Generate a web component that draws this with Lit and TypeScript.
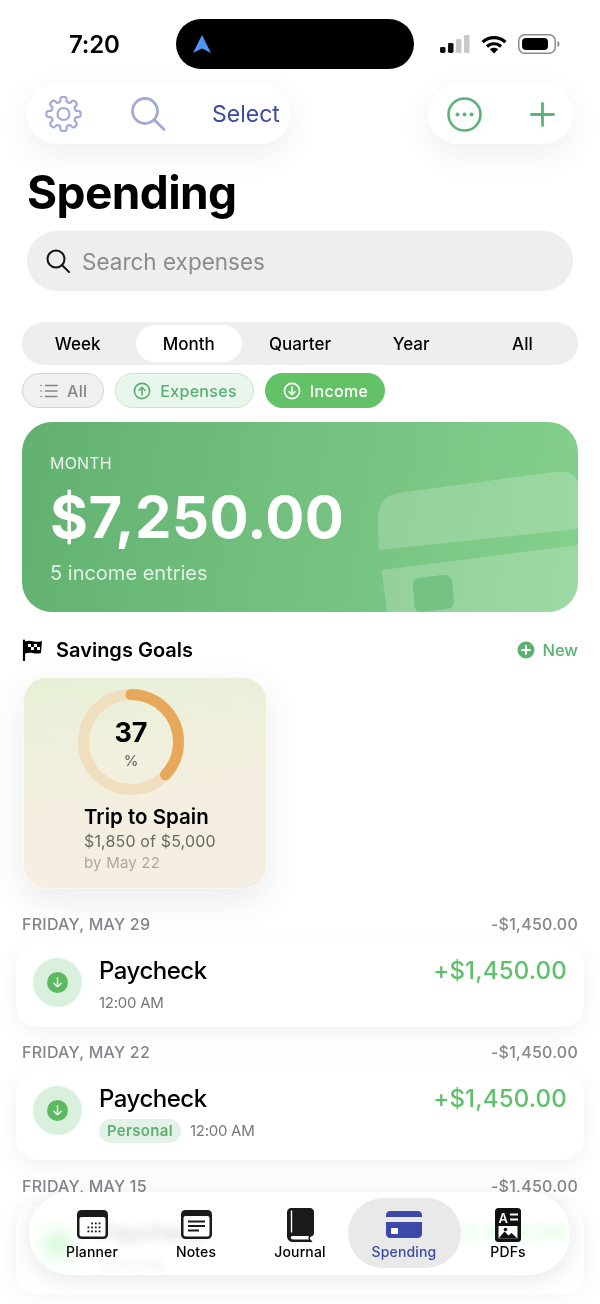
import { LitElement, html, css, svg } from "lit";
import { customElement } from "lit/decorators.js";

const arrowCircle = (dir: "up" | "down", color: string, size = 18) => html`<svg class="ic" width=${size} height=${size} viewBox="0 0 18 18" fill="none" stroke=${color} stroke-width="1.6" stroke-linecap="round" stroke-linejoin="round">
  <circle cx="9" cy="9" r="7.6"></circle>
  ${dir === "up" ? svg`<path d="M9 13V5.4M6 8.2l3-3 3 3"></path>` : svg`<path d="M9 5v7.6M6 9.8l3 3 3-3"></path>`}
</svg>`;

const txIcon = html`<div class="tx-ic"><div class="tx-dot"><svg width="13" height="13" viewBox="0 0 13 13" fill="none" stroke="#fff" stroke-width="1.3" stroke-linecap="round" stroke-linejoin="round"><path d="M6.5 1.8v9M2.9 7.3l3.6 3.6 3.6-3.6"></path></svg></div></div>`;

const gearPath = (() => {
  // 8-tooth cog outline
  const cx = 18, cy = 18, teeth = 8, ro = 17, ri = 13;
  const pts: string[] = [];
  for (let i = 0; i < teeth; i++) {
    const a = (i / teeth) * Math.PI * 2 - Math.PI / 2;
    const s = Math.PI / teeth;
    const p = (r: number, t: number) => `${(cx + r * Math.cos(t)).toFixed(2)} ${(cy + r * Math.sin(t)).toFixed(2)}`;
    pts.push(`${i === 0 ? "M" : "L"}${p(ri, a - s * 0.62)}`);
    pts.push(`Q${p(ro + 1.2, a - s * 0.5)} ${p(ro, a)}`);
    pts.push(`Q${p(ro + 1.2, a + s * 0.5)} ${p(ri, a + s * 0.62)}`);
    const mid = a + s;
    pts.push(`Q${p(ri - 1.4, mid)} ${p(ri, mid + s - s * 0.62)}`);
  }
  return pts.join(" ") + "Z";
})();

const plannerDots = [0, 1, 2].flatMap((r) =>
  [0, 1, 2, 3].map((c) => (r === 0 && c === 0 ? null : svg`<rect x=${10.5 + c * 3.7} y=${12.5 + r * 4} width="1.8" height="1.8" fill="#1a1a1a"></rect>`))
);

@customElement("app-root")
export class AppRoot extends LitElement {
  static styles = css`
    :host {
      display: block;
      position: relative;
      width: 600px;
      height: 1304px;
      overflow: hidden;
      background: #fff;
      font-family: Inter, "Liberation Sans", sans-serif;
      color: #000;
    }
    .ic { display: block; flex: none; }

    .status { display: flex; align-items: center; height: 50px; margin-top: 19px; padding-left: 69px; }
    .time { width: 107px; font-size: 24px; font-weight: 600; letter-spacing: -0.2px; }
    .island { width: 238px; height: 50px; background: #000; border-radius: 25px; display: flex; align-items: center; padding-left: 17px; box-sizing: border-box; }
    .sys { display: flex; align-items: center; margin-left: 26px; gap: 11px; }

    .topbar { display: flex; justify-content: space-between; padding: 15px 27px 0; }
    .pill { height: 60px; border-radius: 30px; background: #fff; display: flex; align-items: center; box-shadow: 0 10px 34px rgba(0, 0, 0, 0.07); }
    .pill.left { width: 263px; padding-left: 18px; box-sizing: border-box; }
    .pill.right { width: 145px; padding-left: 19px; gap: 48px; box-sizing: border-box; }
    .select { margin-left: 46px; font-size: 23px; color: #3f4aa5; }
    .pill.left .s-ic { margin-left: 49px; }

    h1 { margin: 20px 0 0 27px; font-size: 46px; line-height: 56px; font-weight: 700; letter-spacing: -0.6px; }

    .search { margin: 11px 27px 0; height: 60px; border-radius: 30px; background: #eeeeee; display: flex; align-items: center; padding-left: 19px; gap: 12px; color: #8b8b8f; font-size: 22.5px; }

    .seg { margin: 31px 22px 0; height: 43px; border-radius: 22px; background: #eeeeee; display: grid; grid-template-columns: repeat(5, 1fr); font-size: 17px; font-weight: 500; }
    .seg div { display: flex; align-items: center; justify-content: center; border-radius: 19px; margin: 3px 2.5px; }
    .seg .on { background: #fff; }

    .chips { display: flex; gap: 11px; margin: 8px 22px 0; }
    .chip { height: 35px; box-sizing: border-box; border-radius: 18px; border: 1px solid transparent; display: flex; align-items: center; font-size: 16px; font-weight: 500; letter-spacing: 0.3px; gap: 9px; padding: 0 16px 0 17px; }
    .chip.all { background: #f0f0f0; border-color: #d4d4d4; color: #85858a; }
    .chip.exp { background: #e9f6ec; border-color: #c9e5d0; color: #59ae72; }
    .chip.inc { background: #62c265; color: #fff; }

    .hero { position: relative; overflow: hidden; margin: 14px 22px 0; height: 190px; border-radius: 30px; background: linear-gradient(100deg, #62b171 0%, #85d08d 100%); color: #fff; padding: 31px 28px 0; box-sizing: border-box; }
    .hero-deco { position: absolute; left: 0; top: 0; }
    .hero .lbl { position: relative; font-size: 16px; line-height: 20px; letter-spacing: 0.2px; color: rgba(255, 255, 255, 0.85); }
    .hero .amt { position: relative; font-size: 58px; line-height: 70px; font-weight: 700; margin-top: 9px; letter-spacing: 0.4px; }
    .hero .sub { position: relative; font-size: 20px; line-height: 26px; margin-top: 8px; color: rgba(255, 255, 255, 0.8); }

    .sec { display: flex; align-items: center; margin: 24px 22px 0; height: 28px; }
    .sec .name { margin-left: 12px; font-size: 20px; font-weight: 600; flex: 1; }
    .new { display: flex; align-items: center; gap: 7px; color: #5bb072; font-size: 16.5px; font-weight: 500; }

    .goal { position: relative; margin: 13px 0 0 23px; width: 244px; height: 212px; box-sizing: border-box; border-radius: 24px; border: 1.5px solid #fbf8ef; background: linear-gradient(170deg, #e6f0d6 0%, #f3efdf 45%, #f6eee3 100%); box-shadow: 0 12px 34px rgba(60, 60, 90, 0.1); display: flex; flex-direction: column; padding: 11px 0 0 60px; }
    .ring { position: relative; width: 106px; height: 106px; margin-left: -6px; }
    .ring-txt { position: absolute; inset: 0; display: flex; flex-direction: column; align-items: center; padding-top: 27px; box-sizing: border-box; }
    .ring-txt b { font-size: 27px; line-height: 34px; font-weight: 700; }
    .ring-txt span { font-size: 15px; line-height: 18px; margin-top: 2px; color: #5f5f5a; }
    .g-title { font-size: 20.5px; line-height: 26px; font-weight: 600; margin-top: 9px; }
    .g-amt { font-size: 16px; line-height: 21px; margin-top: 1px; color: #6a6a64; letter-spacing: 0.15px; white-space: nowrap; }
    .g-by { font-size: 15px; line-height: 21px; color: #a9a9a1; letter-spacing: 0.2px; }

    .day { display: flex; justify-content: space-between; margin: 0 22px; font-size: 16px; line-height: 20px; font-weight: 500; color: #85858a; letter-spacing: 0.25px; }
    .tx { margin: 8px 16px 0; box-sizing: border-box; border-radius: 22px; background: #fff; display: flex; padding: 16px 17px 0; box-shadow: 0 6px 24px rgba(0, 0, 0, 0.06); }
    .tx-ic { width: 49px; height: 49px; border-radius: 50%; background: #d9f0dc; display: flex; align-items: center; justify-content: center; flex: none; }
    .tx-dot { width: 21px; height: 21px; border-radius: 50%; background: #5cb95f; display: flex; align-items: center; justify-content: center; }
    .tx-main { flex: 1; margin-left: 17px; margin-top: -2px; }
    .tx-name { font-size: 24px; line-height: 30px; font-weight: 500; letter-spacing: -0.5px; }
    .tx-meta { display: flex; align-items: center; gap: 9px; margin-top: 5px; font-size: 15px; line-height: 24px; color: #77777b; letter-spacing: -0.25px; }
    .tag { height: 24px; border-radius: 12px; background: #e3f1e6; color: #5bb072; font-weight: 600; padding: 0 8px; font-size: 15px; letter-spacing: 0.3px; }
    .tx-amt { font-size: 24px; line-height: 30px; font-weight: 500; margin-top: -2px; color: #5cc26a; letter-spacing: 0.2px; }

    .nav { position: absolute; left: 29px; top: 1192px; width: 541px; height: 83px; box-sizing: border-box; border-radius: 42px; padding: 5px 11px 6px 10px; display: grid; grid-template-columns: repeat(5, 104px); background: rgba(255, 255, 255, 0.84); backdrop-filter: blur(5px) saturate(2.4); border: 1px solid rgba(255, 255, 255, 0.9); box-shadow: 0 4px 26px rgba(0, 0, 0, 0.1); }
    .nav-item { display: flex; flex-direction: column; align-items: center; font-size: 14px; font-weight: 500; letter-spacing: 0.15px; border-radius: 36px; }
    .nav-item .box { height: 37px; margin-top: 8px; display: flex; align-items: center; justify-content: center; }
    .nav-item span { line-height: 18px; margin-top: 0; }
    .nav-item.on { background: #e9e9e9; color: #3c49a8; margin: 0 -4.5px; }
    .fade { position: absolute; left: 0; right: 0; bottom: 0; height: 30px; background: linear-gradient(180deg, rgba(255, 255, 255, 0), rgba(255, 255, 255, 0.7)); }
  `;

  private statusIcons() {
    return html`<div class="sys">
      <svg class="ic" width="30" height="18" viewBox="0 0 30 18">
        <rect x="0" y="12" width="5.5" height="6" rx="1.4" fill="#111"></rect>
        <rect x="8" y="8" width="5.5" height="10" rx="1.4" fill="#111"></rect>
        <rect x="16" y="4" width="5.5" height="14" rx="1.4" fill="#c9c9c9"></rect>
        <rect x="24" y="0" width="5.5" height="18" rx="1.4" fill="#c9c9c9"></rect>
      </svg>
      <svg class="ic" width="26" height="19" viewBox="0 0 26 19" fill="none" stroke="#000" stroke-width="3.2">
        <path d="M1.6 7.2C8 1 18 1 24.4 7.2"></path>
        <path d="M6 11.6c4-3.8 10-3.8 14 0"></path>
        <path d="M13 18.6l-4.2-4.4c2.3-2 6.100-2 8.400 0z" fill="#000" stroke="none"></path>
      </svg>
      <svg class="ic" width="42" height="20" viewBox="0 0 42 20">
        <rect x="0.75" y="0.75" width="36.500" height="18.500" rx="6" fill="none" stroke="#8b8b8b" stroke-width="1.500"></rect>
        <rect x="4" y="4" width="26" height="12" rx="4" fill="#000"></rect>
        <path d="M39.500 7v6c1.300-.4 2-1.600 2-3s-.7-2.600-2-3z" fill="#8b8b8b"></path>
      </svg>
    </div>`;
  }

  private txCard(date: string, height: number, tag: boolean, mt: number) {
    return html`<div class="day" style="margin-top:${mt}px"><span>${date}</span><span>-$1,450.00</span></div>
      <div class="tx" style="height:${height}px">
        ${txIcon}
        <div class="tx-main">
          <div class="tx-name">Paycheck</div>
          <div class="tx-meta">${tag ? html`<span class="tag">Personal</span>` : ""}<span>12:00 AM</span></div>
        </div>
        <div class="tx-amt">+$1,450.00</div>
      </div>`;
  }

  private navItem(label: string, icon: unknown, on = false) {
    return html`<div class="nav-item ${on ? "on" : ""}"><div class="box">${icon}</div><span>${label}</span></div>`;
  }

  render() {
    const c = 2 * Math.PI * 47.5;
    return html`
      <div class="status">
        <div class="time">7:20</div>
        <div class="island">
          <svg class="ic" width="18" height="18" viewBox="0 0 18 18"><path d="M9 0l9 18-9-4.500L0 18z" fill="#4f95f5"></path></svg>
        </div>
        ${this.statusIcons()}
      </div>

      <div class="topbar">
        <div class="pill left">
          <svg class="ic" width="37" height="36" viewBox="0 0 36 36" fill="none" stroke="#a3a9d8" stroke-width="2.200" stroke-linejoin="round">
            <path d=${gearPath}></path><circle cx="18" cy="18" r="6"></circle>
          </svg>
          <svg class="ic s-ic" width="35" height="34" viewBox="0 0 35 34" fill="none" stroke="#a3a9d8" stroke-width="2.800" stroke-linecap="round">
            <circle cx="14" cy="14" r="12.500"></circle><path d="M23.500 23l9.500 9.500"></path>
          </svg>
          <div class="select">Select</div>
        </div>
        <div class="pill right">
          <svg class="ic" width="35" height="35" viewBox="0 0 35 35" fill="none">
            <circle cx="17.500" cy="17.500" r="16" stroke="#5cb27a" stroke-width="2.600"></circle>
            <circle cx="10.500" cy="17.500" r="2" fill="#5cb27a"></circle><circle cx="17.500" cy="17.500" r="2" fill="#5cb27a"></circle><circle cx="24.500" cy="17.500" r="2" fill="#5cb27a"></circle>
          </svg>
          <svg class="ic" width="25" height="25" viewBox="0 0 25 25" stroke="#5cb27a" stroke-width="2.800" stroke-linecap="round"><path d="M12.500 1.500v22M1.500 12.500h22"></path></svg>
        </div>
      </div>

      <h1>Spending</h1>

      <div class="search">
        <svg class="ic" width="24" height="24" viewBox="0 0 24 24" fill="none" stroke="#111" stroke-width="2" stroke-linecap="round"><circle cx="10" cy="10" r="8.500"></circle><path d="M16.500 16.500l6.500 6.500"></path></svg>
        <span>Search expenses</span>
      </div>

      <div class="seg"><div>Week</div><div class="on">Month</div><div>Quarter</div><div>Year</div><div>All</div></div>

      <div class="chips">
        <div class="chip all">
          <svg class="ic" width="18" height="14" viewBox="0 0 18 14" stroke="#85858a" stroke-width="1.500" stroke-linecap="round"><path d="M5.500 1.500H17M5.500 7H17M5.500 12.500H17M1 1.500h.2M1 7h.2M1 12.500h.2"></path></svg>
          <span>All</span>
        </div>
        <div class="chip exp">${arrowCircle("up", "#59ae72")}<span>Expenses</span></div>
        <div class="chip inc">${arrowCircle("down", "#fff")}<span>Income</span></div>
      </div>

      <div class="hero">
        <svg class="hero-deco" width="556" height="190" viewBox="0 0 556 190">
          <path d="M356 106c-1-22 5-32 20-35l157-21c12-2 20 3 23 10v47L357 128z" fill="#fff" fill-opacity="0.2"></path>
          <path d="M359.500 148L556 123V190H365z" fill="#fff" fill-opacity="0.2"></path>
          <path d="M396 156l24-3c6-.7 10 2 10.500 8l1.300 17c.4 5-2 8.500-7 9l-24 3c-5 .5-8-2-8.500-7l-1.300-18c-.4-5 1-8.500 5-9z" fill="#6fbf7f" fill-opacity="0.85"></path>
        </svg>
        <div class="lbl">MONTH</div>
        <div class="amt">$7,250.00</div>
        <div class="sub">5 income entries</div>
      </div>

      <div class="sec">
        <svg class="ic" width="22" height="22" viewBox="0 0 22 22">
          <path d="M2 1.500v20" stroke="#000" stroke-width="2.200" stroke-linecap="round"></path>
          <path d="M3 2.500c3-1.500 6-.5 9 0s5 .5 8-.5l-1 12c-3 1-6 .5-8.500 0s-5-.5-7.500.5z" fill="#000"></path>
          <path d="M6 5h3v3H6zM12 5h3v3h-3zM9 8h3v3H9zM15 8h3v3h-3z" fill="#fff"></path>
        </svg>
        <div class="name">Savings Goals</div>
        <div class="new">
          <svg class="ic" width="18" height="18" viewBox="0 0 18 18"><circle cx="9" cy="9" r="8.500" fill="#5bb072"></circle><path d="M9 5v8M5 9h8" stroke="#fff" stroke-width="2" stroke-linecap="round"></path></svg>
          <span>New</span>
        </div>
      </div>

      <div class="goal">
        <div class="ring">
          <svg class="ic" width="106" height="106" viewBox="0 0 106 106" fill="none">
            <circle cx="53" cy="53" r="47.500" stroke="#efdfbf" stroke-width="11"></circle>
            <circle cx="53" cy="53" r="47.500" stroke="#e7a85b" stroke-width="11" stroke-linecap="round" stroke-dasharray="${0.37 * c} ${c}" transform="rotate(-90 53 53)"></circle>
          </svg>
          <div class="ring-txt"><b>37</b><span>%</span></div>
        </div>
        <div class="g-title">Trip to Spain</div>
        <div class="g-amt">$1,850 of $5,000</div>
        <div class="g-by">by May 22</div>
      </div>

      ${this.txCard("FRIDAY, MAY 29", 85, false, 25)}
      ${this.txCard("FRIDAY, MAY 22", 90, true, 15)}
      ${this.txCard("FRIDAY, MAY 15", 90, false, 16)}

      <div class="fade"></div>

      <div class="nav">
        ${this.navItem("Planner", html`<svg class="ic" width="31" height="29" viewBox="0 0 31 29">
          <rect x="0" y="0" width="31" height="29" rx="4.500" fill="#1a1a1a"></rect>
          <rect x="2.500" y="7" width="26" height="19.500" rx="2" fill="#fff"></rect>
          ${plannerDots}
        </svg>`)}
        ${this.navItem("Notes", html`<svg class="ic" width="31" height="29" viewBox="0 0 31 29">
          <rect x="0" y="0" width="31" height="29" rx="4.500" fill="#1a1a1a"></rect>
          <rect x="2.500" y="6" width="26" height="20.500" rx="2" fill="#fff"></rect>
          <path d="M7 11.500h17M7 16h17M7 20.500h11" stroke="#1a1a1a" stroke-width="2"></path>
        </svg>`)}
        ${this.navItem("Journal", html`<svg class="ic" width="27" height="34" viewBox="0 0 27 34">
          <path d="M4 0h19c2 0 4 2 4 4v21c0 2-1 3-3 3.500-1.500 1-1.500 2.500 0 3.500l1.500 2H6c-3.500 0-6-2.500-6-6V4c0-2 2-4 4-4z" fill="#1a1a1a"></path>
          <path d="M4.500 2.500v22" stroke="#fff" stroke-width="1.400"></path>
          <path d="M5 28h17c-.8 1.200-.8 2.400 0 3.500H6c-2.600 0-2.600-3.500-1-3.500z" fill="#fff"></path>
        </svg>`)}
        ${this.navItem("Spending", html`<svg class="ic" width="36" height="27" viewBox="0 0 36 27">
          <path d="M4 0h28c2.200 0 4 1.800 4 4v2H0V4c0-2.200 1.800-4 4-4zM0 11h36v12c0 2.200-1.800 4-4 4H4c-2.200 0-4-1.800-4-4z" fill="#3c49a8"></path>
          <rect x="5" y="17" width="7" height="6" rx="1" fill="#fff"></rect>
        </svg>`, true)}
        ${this.navItem("PDFs", html`<svg class="ic" width="26" height="34" viewBox="0 0 26 34">
          <rect x="0" y="0" width="26" height="34" rx="3.500" fill="#111"></rect>
          <text x="3.500" y="15" font-family="Inter, sans-serif" font-size="13" font-weight="600" fill="#fff">A</text>
          <path d="M15 6.500h8M15 11.500h8" stroke="#fff" stroke-width="2"></path>
          <rect x="3.500" y="18" width="19" height="12.500" fill="#fff"></rect>
          <path d="M3.500 30.500l6-7 4 4 3-2.500 6 5.500z" fill="#111"></path>
          <circle cx="10.500" cy="21.500" r="1.800" fill="#111"></circle>
        </svg>`)}
      </div>
    `;
  }
}
